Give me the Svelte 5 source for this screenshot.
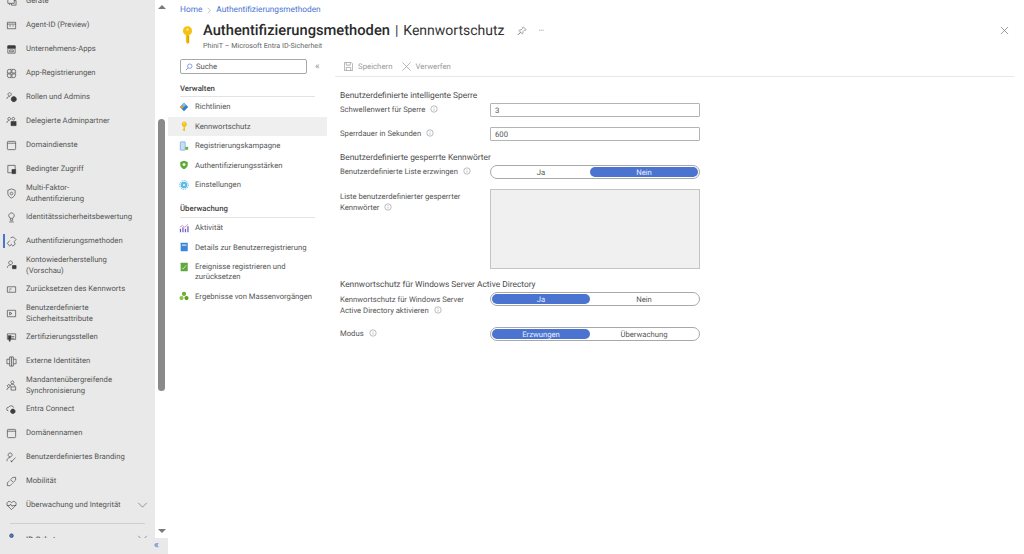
<script>
  const navItems = [
    { l: ['Geräte'], i: 'M2 3h7v5H2zM9 5h2v5H6V8M4 8v2', },
    { l: ['Agent-ID (Preview)'], i: 'M1.500 2.500h9v7h-9zM1.500 4.500h9M3.500 6.500h2M7 6.500h1.500' },
    { l: ['Unternehmens-Apps'], i: 'M2 2h8v8H2zM2 4.500h8M4 6.500h4v2H4z', fill: 'M2 2h8v2.500H2z' },
    { l: ['App-Registrierungen'], i: 'M1.500 3.500a2 2 0 0 1 2-2h2v4h-4zM6.500 1.500h2a2 2 0 0 1 2 2v2h-4zM1.500 6.500h4v4h-2a2 2 0 0 1-2-2zM6.500 6.500h4v2a2 2 0 0 1-2 2h-2z' },
    { l: ['Rollen und Admins'], i: 'M4 .8a1.800 1.800 0 1 1-.01 0M1 7.500c0-1.500 1-2.500 3-2.500', fill: 'M8.500 5a2.800 2.800 0 1 1-.01 0z' },
    { l: ['Delegierte Adminpartner'], i: 'M3.500 1.500a1.500 1.500 0 1 1-.01 0M1 7.500c0-1.500 1-2.500 2.500-2.500M8 1.500a1.500 1.500 0 1 1-.01 0', fill: 'M5.500 6h5.500v4.500H5.500z' },
    { l: ['Domaindienste'], i: 'M2.500 1.500h7a1 1 0 0 1 1 1v7a1 1 0 0 1-1 1h-7a1 1 0 0 1-1-1v-7a1 1 0 0 1 1-1zM1.500 3.500h9' },
    { l: ['Bedingter Zugriff'], i: 'M2 1.500h8v5M2 1.500v8h4', fill: 'M6.500 6h4v4.500h-4z' },
    { l: ['Multi-Faktor-', 'Authentifizierung'], i: 'M6 1l4 1.500v3.500c0 2.500-2 4-4 5-2-1-4-2.500-4-5V2.500zM6 4.500a1.500 1.500 0 1 1-.01 0' },
    { l: ['Identitätssicherheitsbewertung'], i: 'M6 1a3 3 0 1 1-.01 0M4.800 7v2h2.400V7M3.500 10.800h5' },
    { l: ['Authentifizierungsmethoden'], i: 'M5 2l3-1 3 3-2 2 1 3-2.500 2-2-2M4 5L1.500 8 4 11l2-2', active: true },
    { l: ['Kontowiederherstellung', '(Vorschau)'], i: 'M5 1a2 2 0 1 1-.01 0M1.500 8.500c0-2 1.500-3 3.500-3', fill: 'M7 6h4v3.500H7z' },
    { l: ['Zurücksetzen des Kennworts'], i: 'M1.500 3h9v6h-9zM3.500 5.500h2.500M3.500 7.500h1' },
    { l: ['Benutzerdefinierte', 'Sicherheitsattribute'], i: 'M1.500 2.500h9v7h-9zM4 4.500l2.500 1.500L4 7.500z' },
    { l: ['Zertifizierungsstellen'], i: 'M1.500 2h9v6h-9zM6 5h3M6 6.800h3', fill: 'M2.500 4h3v3.500h-1v2.500h-1V7.500h-1z' },
    { l: ['Externe Identitäten'], i: 'M4 1h4v10H4zM4 3.500H1v5h3M8 3.500h3v5H8M6 1v10' },
    { l: ['Mandantenübergreifende', 'Synchronisierung'], i: 'M7 1a1.600 1.600 0 1 1-.01 0M4.500 7c0-1.500 1-2.500 2.500-2.500S9.500 5.500 9.500 7M3 5a1.500 1.500 0 1 1-.01 0M1 11c0-1.500.8-2.500 2-2.500M5.500 7.500h5v3.500h-5z' },
    { l: ['Entra Connect'], i: 'M2.500 7.500a2 2 0 0 1 .5-4 3 3 0 0 1 5.500.5', fill: 'M7.500 5.500a2.500 2.500 0 1 1-.01 0z' },
    { l: ['Domänennamen'], i: 'M2.500 1.500h7a1 1 0 0 1 1 1v7a1 1 0 0 1-1 1h-7a1 1 0 0 1-1-1v-7a1 1 0 0 1 1-1zM1.500 3.500h9' },
    { l: ['Benutzerdefiniertes Branding'], i: 'M4.500 1a2.200 2.200 0 1 1-.01 0M1 10c0-2.500 1.500-4 3.500-4M6 10.500l4.500-4.500M7 10.500H5.500V9' },
    { l: ['Mobilität'], i: 'M7.500 1.500h3v3L8 7 5 4zM4 5L1.500 7.500v3h3L7 8M8.800 3.200h.01' },
    { l: ['Überwachung und Integrität'], i: 'M6 10.500L1.500 6C0 4 1.500 1.500 3.500 1.500 5 1.500 6 3 6 3s1-1.500 2.500-1.500c2 0 3.500 2.500 2 4.500zM1 6h3l1-1.500L6.500 7l1-1H11', chevron: true },
  ];
  const menuA = [
    { t: ['Richtlinien'], k: 'policy' },
    { t: ['Kennwortschutz'], k: 'key', sel: true },
    { t: ['Registrierungskampagne'], k: 'reg' },
    { t: ['Authentifizierungsstärken'], k: 'shield' },
    { t: ['Einstellungen'], k: 'gear' },
  ];
  const menuB = [
    { t: ['Aktivität'], k: 'bars' },
    { t: ['Details zur Benutzerregistrierung'], k: 'book' },
    { t: ['Ereignisse registrieren und', 'zurücksetzen'], k: 'book2', tall: true },
    { t: ['Ergebnisse von Massenvorgängen'], k: 'group' },
  ];
</script>

{#snippet info()}
  <svg class="info" viewBox="0 0 10 10"><circle cx="5" cy="5" r="4" /><path d="M5 4.500v2.500M5 2.800v.8" /></svg>
{/snippet}

{#snippet keyIcon()}
  <path fill="#f2c21a" d="M6 .5a3.300 3.300 0 0 1 1.200 6.400V12H5.500v-1H4.500V9.500h1V6.900A3.300 3.300 0 0 1 6 .5z" />
  <circle cx="6" cy="2.700" r=".8" fill="#fff3b8" />
{/snippet}

{#snippet menuIcon(k)}
  <svg class="micon" viewBox="0 0 12 12">
    {#if k === 'policy'}
      <path fill="#2f7fd0" d="M6 1l5 5-5 5-5-5z" /><path fill="#e0a030" d="M1 6l2.500-2.500L6 6 3.500 8.500z" /><path fill="#7fc0ea" d="M6 1l2.500 2.500L6 6 3.500 3.500z" />
    {:else if k === 'key'}
      {@render keyIcon()}
    {:else if k === 'reg'}
      <rect x="1.500" y="1" width="6" height="10" rx=".7" fill="#c7dcf5" stroke="#5a9ae0" stroke-width=".7" /><rect x="7.500" y="7" width="3.500" height="3.500" fill="#6db33f" />
    {:else if k === 'shield'}
      <path fill="#5ea83a" d="M6 .8l4.500 1.500v3.500c0 2.800-2.300 4.500-4.500 5.400-2.200-.9-4.500-2.600-4.500-5.400V2.300z" /><circle cx="6" cy="5.500" r="1.800" fill="#e8f5d8" />
    {:else if k === 'gear'}
      <circle cx="6" cy="6" r="4" fill="#5cb7ea" /><circle cx="6" cy="6" r="5.200" fill="none" stroke="#5cb7ea" stroke-width="1.200" stroke-dasharray="1.500 1.200" /><circle cx="6" cy="6" r="1.500" fill="#c6e8fa" />
    {:else if k === 'bars'}
      <path fill="#6b5fc7" d="M1 7h1.500v4H1zM4 5h1.500v6H4zM7 7h1.500v4H7zM10 4h1.500v7H10z" /><path fill="none" stroke="#c060b0" stroke-width=".8" d="M1 5l3-2 3 2 4-3.500" />
    {:else if k === 'book'}
      <rect x="2" y="1" width="8.500" height="10" rx=".5" fill="#3d85d8" /><rect x="3.500" y="3" width="5.500" height="1.500" fill="#cfe3f8" />
    {:else if k === 'book2'}
      <rect x="2" y="1" width="8.500" height="10" rx=".5" fill="#5fa83e" /><path stroke="#dff0d0" stroke-width=".9" fill="none" d="M3.500 7l1.500 1.500L8.500 4" />
    {:else}
      <circle cx="6" cy="3.500" r="2.500" fill="#6ab030" /><circle cx="3" cy="8.500" r="2.500" fill="#8cc63f" /><circle cx="9" cy="8.500" r="2.500" fill="#5a9e28" />
    {/if}
  </svg>
{/snippet}

{#snippet toggle(a, b, left)}
  <div class="toggle">
    <span class="seg-a" class:on={left}>{a}</span>
    <span class="seg-b" class:on={!left}>{b}</span>
  </div>
{/snippet}

<div class="page">
  <aside class="nav">
    <div class="navscroll">
      <div class="navlist">
        {#each navItems as it}
          <div class="navrow">
            {#if it.active}<span class="marker"></span>{/if}
            <svg class="nicon" viewBox="0 0 12 12">
              {#if it.fill}<path d={it.fill} fill="#3c3c3c" />{/if}
              <path d={it.i} />
            </svg>
            <span class="navtext">{#each it.l as line}<span>{line}</span>{/each}</span>
            {#if it.chevron}<svg class="chev" viewBox="0 0 12 7"><path d="M1 1l5 5 5-5" /></svg>{/if}
          </div>
        {/each}
        <div class="navdivider"></div>
        <div class="navrow idrow">
          <svg class="nicon" viewBox="0 0 12 12"><circle cx="6" cy="4" r="2" fill="#3f7fe8" /></svg>
          <span class="navtext idtext"><b>ID-Schutz</b></span>
          <svg class="chev" viewBox="0 0 12 7"><path d="M1 1l5 5 5-5" /></svg>
        </div>
      </div>
      <div class="scrollbar">
        <span class="arrow up"></span>
        <span class="track"><span class="thumb"></span></span>
        <span class="arrow down"></span>
      </div>
    </div>
    <div class="navfoot">«</div>
  </aside>

  <main class="main">
    <nav class="crumbs"><span>Home</span><svg viewBox="0 0 6 10"><path d="M1 1l4 4-4 4" /></svg><span>Authentifizierungsmethoden</span></nav>
    <header class="head">
      <svg class="bigkey" viewBox="0 0 12 16">
        <path fill="#f5c211" d="M6 0a4.200 4.200 0 0 1 1.500 8.100V15L6 16l-1.500-1.500V8.100A4.200 4.200 0 0 1 6 0z" />
        <path fill="#d9a400" d="M6 8.500h1.500V15L6 16z" />
        <circle cx="6" cy="3" r="1" fill="#fff4b0" />
      </svg>
      <div class="titles">
        <h1><b>Authentifizierungsmethoden</b> | Kennwortschutz</h1>
        <p>PhiniT – Microsoft Entra ID-Sicherheit</p>
      </div>
      <svg class="pin" viewBox="0 0 12 12"><path d="M7.500 1l3.500 3.500-1 .7-1-.3-2 2 .2 1.800-.9.800-2-2-3 3 3-3-2-2 .8-.9 1.800.2 2-2-.3-1z" /></svg>
      <span class="more">···</span>
      <svg class="close" viewBox="0 0 10 10"><path d="M1 1l8 8M9 1l-8 8" /></svg>
    </header>

    <div class="body">
      <aside class="menu">
        <div class="searchrow">
          <div class="search">
            <svg viewBox="0 0 10 10"><circle cx="6" cy="4" r="2.800" /><path d="M4 6L1 9" /></svg>
            <span>Suche</span>
          </div>
          <span class="collapse">«</span>
        </div>
        <div class="group first">Verwalten</div>
        {#each menuA as m}
          <div class="mrow" class:sel={m.sel}>
            {@render menuIcon(m.k)}
            <span class="mtext">{m.t[0]}</span>
          </div>
        {/each}
        <div class="group">Überwachung</div>
        {#each menuB as m}
          <div class="mrow" class:tall={m.tall}>
            {@render menuIcon(m.k)}
            <span class="mtext">{#each m.t as line}<span>{line}</span>{/each}</span>
          </div>
        {/each}
      </aside>

      <section class="blade">
        <div class="toolbar">
          <svg class="tool" viewBox="0 0 10 10"><path d="M.5.5h7.500l1.500 1.500v7.500H.5zM2.500.5v3h4.500v-3M2.500 9.500V6h5v3.500" /></svg>
          <span>Speichern</span>
          <svg class="tool x" viewBox="0 0 10 10"><path d="M.5.5l9 9M9.500.5l-9 9" /></svg>
          <span>Verwerfen</span>
        </div>

        <div class="form">
          <h2>Benutzerdefinierte intelligente Sperre</h2>
          <div class="field tight">
            <label>Schwellenwert für Sperre {@render info()}</label>
            <div class="input">3</div>
          </div>
          <div class="field second">
            <label>Sperrdauer in Sekunden {@render info()}</label>
            <div class="input">600</div>
          </div>

          <h2 class="h-b">Benutzerdefinierte gesperrte Kennwörter</h2>
          <div class="field snug">
            <label>Benutzerdefinierte Liste erzwingen {@render info()}</label>
            {@render toggle('Ja', 'Nein', false)}
          </div>
          <div class="field areafield">
            <label>Liste benutzerdefinierter gesperrter<br />Kennwörter {@render info()}</label>
            <div class="area"></div>
          </div>

          <h2 class="h-c">Kennwortschutz für Windows Server Active Directory</h2>
          <div class="field two">
            <label>Kennwortschutz für Windows Server<br />Active Directory aktivieren {@render info()}</label>
            {@render toggle('Ja', 'Nein', true)}
          </div>
          <div class="field modus">
            <label>Modus {@render info()}</label>
            {@render toggle('Erzwungen', 'Überwachung', true)}
          </div>
        </div>
      </section>
    </div>
  </main>
</div>

<style>
  :global(body) { margin: 0; background: #fff; }
  .page {
    display: flex;
    width: 1024px;
    height: 554px;
    overflow: hidden;
    font-family: Roboto, "Open Sans", sans-serif;
    font-size: 7.700px;
    color: #555;
    background: #fff;
    text-rendering: geometricPrecision;
  }

  /* left nav */
  .nav { width: 168px; flex: none; display: flex; flex-direction: column; }
  .navscroll { height: 538px; display: flex; overflow: hidden; }
  .navlist { width: 155px; flex: none; background: #e9e9e9; margin-top: -11px; height: 549px; overflow: hidden; }
  .navrow { position: relative; height: 24px; display: flex; align-items: center; }
  .marker { position: absolute; left: 3px; top: 5px; width: 1.500px; height: 14px; background: #4a74d0; }
  .nicon { width: 11px; height: 11px; margin-left: 6px; margin-right: 9px; flex: none; fill: none; stroke: #3c3c3c; stroke-width: .7; }
  .navtext { display: flex; flex-direction: column; line-height: 10.500px; white-space: nowrap; padding-top: 1px; }
  .chev { position: absolute; left: 137px; top: 9px; width: 11px; height: 6px; fill: none; stroke: #5a5a5a; stroke-width: .7; }
  .navdivider { height: 1px; background: #cfcfcf; margin: 6px 10px 0 10px; }
  .idrow { margin-top: 2px; align-items: flex-start; }
  .idrow .nicon { margin-top: 6px; }
  .idtext { padding-top: 9px; }
  .idtext b { font-weight: 500; }

  .scrollbar { width: 13px; display: flex; flex-direction: column; align-items: center; }
  .arrow { width: 0; height: 0; border-left: 4px solid transparent; border-right: 4px solid transparent; flex: none; }
  .up { border-bottom: 4px solid #7a7a7a; margin-top: 5px; }
  .down { border-top: 4px solid #7a7a7a; margin-bottom: 5px; }
  .track { flex: 1; width: 100%; display: flex; justify-content: center; }
  .thumb { width: 7px; height: 272px; margin-top: 110px; background: #8a8a8a; border-radius: 4px; }
  .navfoot { height: 16px; background: #e9e9e9; color: #4a74d0; text-align: right; padding-right: 9px; font-size: 11px; line-height: 14px; box-sizing: border-box; }

  /* main */
  .main { flex: 1; display: flex; flex-direction: column; min-width: 0; }
  .crumbs { height: 19px; padding: 1px 0 0 12px; box-sizing: border-box; display: flex; gap: 5px; align-items: center; color: #4a74d0; font-size: 8.300px; }
  .crumbs svg { width: 4px; height: 7px; fill: none; stroke: #9a9a9a; stroke-width: .9; }
  .head { height: 33px; display: flex; position: relative; padding-left: 13px; }
  .bigkey { width: 13px; height: 18px; margin-top: 7px; flex: none; }
  .titles { margin-left: 9px; }
  h1 { margin: 0; font-size: 14px; line-height: 22px; font-weight: 400; color: #333; white-space: nowrap; word-spacing: 1.500px; }
  h1 b { font-size: 14.700px; font-weight: 500; color: #2a2a2a; }
  .titles p { margin: -1px 0 0; font-size: 7.150px; line-height: 10px; color: #666; }
  .pin { width: 10px; height: 10px; margin: 7px 0 0 13px; fill: none; stroke: #666; stroke-width: .7; }
  .more { margin: 5px 0 0 11px; color: #666; font-size: 8px; line-height: 14px; letter-spacing: -.3px; }
  .close { position: absolute; left: 832px; top: 7px; width: 9px; height: 9px; fill: none; stroke: #666; stroke-width: .7; }

  .body { flex: 1; display: flex; min-height: 0; }
  .menu { width: 159px; flex: none; }
  .searchrow { display: flex; align-items: center; padding: 7px 0 0 12px; }
  .search { width: 127px; height: 15px; box-sizing: border-box; border: 1px solid #a8a8a8; border-radius: 2px; display: flex; align-items: center; padding-left: 4px; gap: 3px; color: #555; font-size: 7.700px; }
  .search svg { width: 8px; height: 8px; fill: none; stroke: #4a74d0; stroke-width: .8; }
  .collapse { margin-left: 8px; color: #9a9a9a; font-size: 10px; line-height: 12px; }
  .group { margin: 7.500px 12px 0 12px; width: 135px; height: 15px; border-bottom: 1px solid #e3e3e3; font-weight: 500; color: #444; font-size: 7.800px; line-height: 14px; }
  .group.first { margin-top: 8px; height: 14px; }
  .mrow { height: 19.500px; padding-left: 11px; display: flex; align-items: center; white-space: nowrap; }
  .mrow.sel { background: #efefef; }
  .mrow.tall { height: 29.500px; }
  .mrow.tall .micon { margin-bottom: 10px; }
  .mtext { display: flex; flex-direction: column; line-height: 10.500px; padding-top: 1px; }
  .micon { width: 10px; height: 10px; margin-right: 6px; flex: none; }

  /* blade */
  .blade { flex: 1; min-width: 0; padding-right: 10px; }
  .toolbar { margin: 5px 0 0 8px; height: 20px; padding-left: 9px; box-sizing: border-box; border-bottom: 1px solid #e8e8e8; display: flex; align-items: center; color: #9a9a9a; font-size: 7.800px; }
  .tool { width: 9px; height: 9px; fill: none; stroke: #8c8c8c; stroke-width: .7; margin-right: 5px; flex: none; }
  .tool.x { margin-left: 9px; }
  .form { padding: 13px 0 0 13px; }
  h2 { margin: 0; height: 11px; box-sizing: border-box; padding-top: 1px; font-size: 8.400px; line-height: 11px; font-weight: 400; color: #4c4c4c; white-space: nowrap; }
  .h-b { margin-top: 12px; padding-top: 0; }
  .h-c { margin-top: 11px; padding-top: 0; }
  .field { display: flex; align-items: center; }
  .field label { width: 150px; flex: none; line-height: 10.500px; white-space: nowrap; padding-top: 1px; }
  .tight { margin-top: 2px; }
  .second { margin-top: 10px; }
  .snug { margin-top: 1px; }
  .input { width: 210px; height: 14px; box-sizing: border-box; border: 1px solid #b4b4b4; border-radius: 1px; padding-left: 4px; line-height: 13px; font-size: 7.700px; color: #555; }
  .info { width: 8px; height: 8px; margin-left: 3px; vertical-align: -1px; fill: none; stroke: #777; stroke-width: .6; }
  .toggle { width: 210px; height: 14px; box-sizing: border-box; border: 1px solid #a8a8a8; border-radius: 7px; padding: 1px; display: flex; flex: none; }
  .toggle span { text-align: center; line-height: 11px; border-radius: 5px; color: #555; font-size: 7.700px; }
  .seg-a { width: 98px; flex: none; }
  .seg-b { flex: 1; }
  .toggle span.on { background: #4a74d0; color: #e8eefb; }
  .areafield { align-items: flex-start; margin-top: 10px; }
  .areafield label { padding-top: 3px; }
  .area { width: 210px; height: 80px; box-sizing: border-box; border: 1px solid #c4c4c4; background: #f0f0f0; }
  .two { align-items: flex-start; margin-top: 1px; }
  .two label { padding-top: 3px; }
  .modus { margin-top: 11px; }
</style>
